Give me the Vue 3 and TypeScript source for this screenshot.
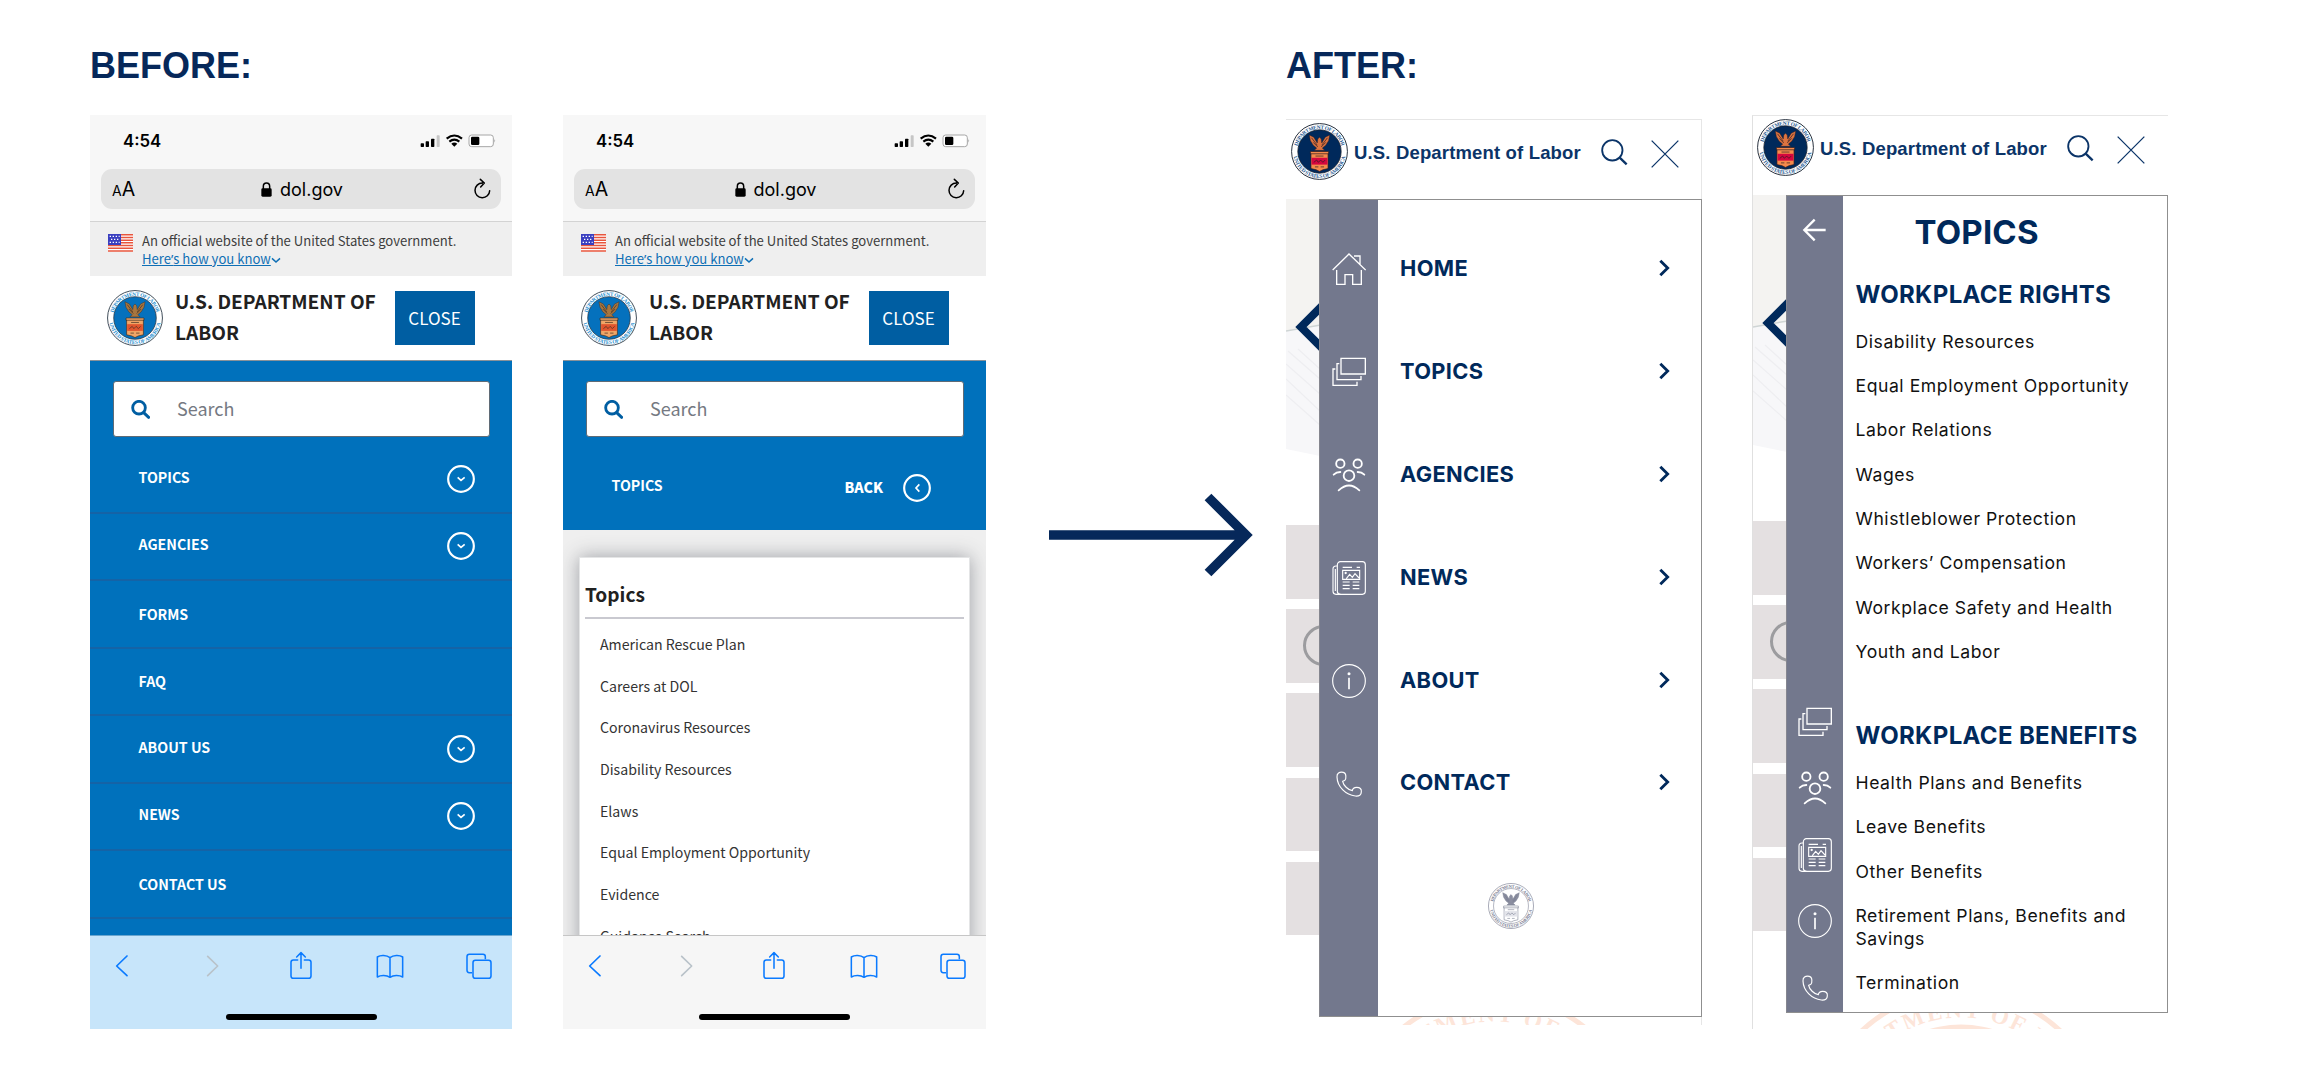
<script setup lang="ts">
import { h } from 'vue'

interface MenuEntry {
  label: string
  expandable: boolean
}
interface DrawerEntry {
  label: string
  icon: string
}
interface TopicGroup {
  title: string
  links: string[]
}

const ringLabel = (path: string, length: number, label: string) =>
  h('text', { class: 'seal-text' }, [
    h('textPath', { href: path, startOffset: '50%', 'text-anchor': 'middle', textLength: length }, label),
  ])

// Department seal; its colours come from the class put on it.
const Seal = (props: { size: number }) =>
  h('svg', { class: 'seal', width: props.size, height: props.size, viewBox: '0 0 100 100' }, [
    h('circle', { class: 'seal-rim', cx: 50, cy: 50, r: 49 }),
    h('path', { id: 'ring-top', d: 'M10.5 50a39.5 39.5 0 0 1 79 0', fill: 'none' }),
    h('path', { id: 'ring-bottom', d: 'M3.5 50a46.5 46.5 0 0 0 93 0', fill: 'none' }),
    ringLabel('#ring-top', 105, 'DEPARTMENT OF LABOR'),
    ringLabel('#ring-bottom', 128, 'UNITED STATES OF AMERICA'),
    h('circle', { class: 'seal-core', cx: 50, cy: 50, r: 38 }),
    h('path', { class: 'seal-eagle', d: 'M32 21l8 4 6 10 1-7 3-3 3 3 1 7 6-10 8-4-2 10-5 8-6 5 4 4H41l4-4-6-5-5-8z' }),
    h('path', { class: 'seal-lines', d: 'M36 26l10 13M39 34l8 8M64 26l-10 13M61 34l-8 8' }),
    h('path', { class: 'seal-shield', d: 'M34 50h32v4h-1v26l-9 2-6 3-6-3-9-2V54h-1z' }),
    h('rect', { class: 'seal-band', x: 36, y: 61, width: 28, height: 12 }),
    h('path', { class: 'seal-lines', d: 'M34 54h32M43 58h14M40 69l5-4 3 4 4-4 4 4 4-4M42 77h6m4 0h6' }),
  ])
Seal.props = ['size']

const oldMenu: MenuEntry[] = [
  { label: 'TOPICS', expandable: true },
  { label: 'AGENCIES', expandable: true },
  { label: 'FORMS', expandable: false },
  { label: 'FAQ', expandable: false },
  { label: 'ABOUT US', expandable: true },
  { label: 'NEWS', expandable: true },
  { label: 'CONTACT US', expandable: false },
]

const oldTopics: string[] = [
  'American Rescue Plan',
  'Careers at DOL',
  'Coronavirus Resources',
  'Disability Resources',
  'Elaws',
  'Equal Employment Opportunity',
  'Evidence',
  'Guidance Search',
]

const drawerMenu: DrawerEntry[] = [
  { label: 'HOME', icon: 'home' },
  { label: 'TOPICS', icon: 'stack' },
  { label: 'AGENCIES', icon: 'people' },
  { label: 'NEWS', icon: 'news' },
  { label: 'ABOUT', icon: 'info' },
  { label: 'CONTACT', icon: 'phone' },
]

const topicGroups: TopicGroup[] = [
  {
    title: 'WORKPLACE RIGHTS',
    links: [
      'Disability Resources',
      'Equal Employment Opportunity',
      'Labor Relations',
      'Wages',
      'Whistleblower Protection',
      'Workers’ Compensation',
      'Workplace Safety and Health',
      'Youth and Labor',
    ],
  },
  {
    title: 'WORKPLACE BENEFITS',
    links: [
      'Health Plans and Benefits',
      'Leave Benefits',
      'Other Benefits',
      'Retirement Plans, Benefits and Savings',
      'Termination',
    ],
  },
]

const browserTools: string[] = ['prev', 'next', 'share', 'book', 'tabs']
const phones: string[] = ['menu', 'topics']
const screens: string[] = ['main', 'sub']
</script>

<template>
  <div class="page">
    <svg class="sprite" width="0" height="0" aria-hidden="true">
      <symbol id="i-prev" viewBox="0 0 90 90"><path d="M60 15L29 45l31 29" fill="none" stroke="#0a7aff" stroke-width="5" stroke-linecap="round" stroke-linejoin="round" /></symbol>
      <symbol id="i-next" viewBox="0 0 90 90"><path d="M35 16l30 29-30 29" fill="none" stroke="#b9c2c9" stroke-width="5" stroke-linecap="round" stroke-linejoin="round" /></symbol>
      <symbol id="i-share" viewBox="0 0 90 90"><path d="M35 27H22q-7 0-7 7v41q0 7 7 7h46q7 0 7-7V34q0-7-7-7H55M45 52V6M32 18L45 5l13 13" fill="none" stroke="#0a7aff" stroke-width="4.600" stroke-linecap="round" stroke-linejoin="round" /></symbol>
      <symbol id="i-book" viewBox="0 0 90 90"><path d="M45 20C35 12 17 11 7 18v60c10-6 28-6 38 1 10-7 28-7 38-1V18c-10-7-28-6-38 2zV78" fill="none" stroke="#0a7aff" stroke-width="4.600" stroke-linejoin="round" /></symbol>
      <symbol id="i-tabs" viewBox="0 0 90 90"><path d="M24 65h-8q-7 0-7-7V17q0-7 7-7h41q7 0 7 7v8" fill="none" stroke="#0a7aff" stroke-width="4.600" /><rect x="27" y="28" width="54" height="54" rx="7" fill="none" stroke="#0a7aff" stroke-width="4.600" /></symbol>

      <symbol id="i-home" viewBox="0 0 102 102"><path d="M2 54L51 6l50 48M66 12h18v25M14 54v43h25V68h23v29h26V54" fill="none" stroke="#fff" stroke-width="4" /></symbol>
      <symbol id="i-stack" viewBox="0 0 102 102"><path d="M27 10h73v47H27zM22 26h-7v48h72V63M10 42H3v49h72V80" fill="none" stroke="#fff" stroke-width="4" /></symbol>
      <symbol id="i-people" viewBox="0 0 102 102"><g fill="none" stroke="#fff" stroke-width="5.500" stroke-linecap="round"><circle cx="25" cy="17" r="12.500" /><circle cx="77" cy="17" r="12.500" /><circle cx="51" cy="53" r="16" /><path d="M5 50q8-8 20-8M77 42q12 0 20 8M20 97q31-29 62 0" /></g></symbol>
      <symbol id="i-news" viewBox="0 0 102 102"><g fill="none" stroke="#fff" stroke-width="3.400"><rect x="16" y="2" width="84" height="98" rx="9" /><path d="M16 15h-4Q3 15 3 24v67q0 9 9 9h14M10 24v66M32 19h28M74 19h10M32 28h51v27H32zM43 53l10-13 8 9 8-11 12 13M32 63h21M62 63h20M32 73h21M62 73h20M32 83h21M62 83h20" /></g><circle cx="41" cy="36" r="3.500" fill="#fff" /></symbol>
      <symbol id="i-info" viewBox="0 0 102 102"><circle cx="51" cy="51" r="49" fill="none" stroke="#fff" stroke-width="3.400" /><circle cx="51" cy="29" r="4.500" fill="#fff" /><path d="M51 41v35" stroke="#fff" stroke-width="5" /></symbol>
      <symbol id="i-phone" viewBox="0 0 102 102"><path d="M15 30C14 18 22 14 34 16c8 2 8 14 7 20-1 5-5 6-9 7 2 12 16 26 29 28 1-7 5-10 13-10 10 0 15 5 14 13 0 10-6 14-18 13C42 84 16 60 15 30z" fill="none" stroke="#fff" stroke-width="3.500" /></symbol>
    </svg>

    <section class="before">
      <h1>BEFORE:</h1>
      <div class="pair">
        <div v-for="kind in phones" :key="kind" class="phone" :class="kind">
          <div class="chrome">
            <div class="status">
              <span class="clock">4:54</span>
              <svg width="76" height="14" viewBox="0 0 228 42">
                <rect x="2" y="28" width="10" height="11" rx="2" /><rect x="17" y="22" width="10" height="17" rx="2" /><rect x="33" y="14" width="10" height="25" rx="2" />
                <rect x="50" y="4" width="9" height="35" rx="2" fill="#c6c6c6" />
                <g fill="none" stroke="#000" stroke-width="6.500"><path d="M80 14q23-19 46 0M88 23q15-12 30 0" /></g>
                <path d="M94 29q9-7 18 0l-9 9z" />
                <rect x="147" y="3" width="73" height="35" rx="8" fill="#fff" stroke="#a6a6a6" stroke-width="3" /><rect x="153" y="8" width="25" height="25" rx="4" /><path d="M223 15q5 5 0 11z" fill="#a6a6a6" />
              </svg>
            </div>
            <div class="url">
              <span class="aa"><small>A</small>A</span>
              <span class="host">
                <svg width="11" height="15" viewBox="0 0 33 45"><rect x="1" y="19" width="31" height="25" rx="4" /><path d="M7 21V13q0-10 9.500-10T26 13v8" fill="none" stroke="#000" stroke-width="4.500" /></svg>
                dol.gov
              </span>
              <svg width="18" height="22" viewBox="0 0 54 66"><path d="M28 15A22 22 0 1 0 50 38M22 4l12 11-11 12" fill="none" stroke="#000" stroke-width="4.500" stroke-linecap="round" stroke-linejoin="round" /></svg>
            </div>
          </div>

          <div class="banner">
            <svg class="flag" width="25" height="18" viewBox="0 0 75 54">
              <rect width="75" height="54" fill="#fff" />
              <path d="M0 2.500h75M0 10.500h75M0 18.500h75M0 26.500h75M0 34.500h75M0 42.500h75M0 51h75" stroke="#e8553d" stroke-width="4.500" />
              <rect width="39" height="33" fill="#3a3fc0" />
              <path d="M5 7h30M9 16h22M5 25h30" stroke="#fff" stroke-width="3.500" stroke-dasharray="4 5" />
            </svg>
            <p>An official website of the United States government.<br /><a>Here<span class="quote">’</span>s how you know</a>
              <svg width="10" height="7" viewBox="0 0 30 21"><path d="M3 4l12 11L27 4" fill="none" stroke="#0f6fb5" stroke-width="4.500" /></svg>
            </p>
          </div>

          <div class="brand">
            <Seal class="bright" :size="56" />
            <h2>U.S. DEPARTMENT OF<br />LABOR</h2>
            <button>CLOSE</button>
          </div>

          <div class="content">
            <div class="nav">
              <div class="search">
                <svg width="19" height="19" viewBox="0 0 57 57"><circle cx="24" cy="23" r="19" fill="none" stroke="#005ea2" stroke-width="8.500" /><path d="M38 38l15 14" stroke="#005ea2" stroke-width="9" stroke-linecap="round" /></svg>
                <span>Search</span>
              </div>
              <template v-if="kind === 'menu'">
                <div v-for="entry in oldMenu" :key="entry.label" class="row" :class="{ open: entry.expandable }">
                  <span>{{ entry.label }}</span>
                  <svg v-if="entry.expandable" width="28" height="28" viewBox="0 0 84 84"><circle cx="42" cy="42" r="38.500" fill="none" stroke="#fff" stroke-width="6.500" /><path d="M32 37l10 9 11-9" fill="none" stroke="#fff" stroke-width="5" /></svg>
                </div>
              </template>
              <div v-else class="row back">
                <span>TOPICS</span>
                <b>BACK</b>
                <svg width="28" height="28" viewBox="0 0 84 84"><circle cx="42" cy="42" r="38.500" fill="none" stroke="#fff" stroke-width="6.500" /><path d="M49 31L39 42l10 11" fill="none" stroke="#fff" stroke-width="5" /></svg>
              </div>
            </div>
            <div v-if="kind === 'topics'" class="card">
              <h3>Topics</h3>
              <ul>
                <li v-for="topic in oldTopics" :key="topic">{{ topic }}</li>
              </ul>
            </div>
          </div>

          <div class="tools">
            <div class="tool-row">
              <svg v-for="tool in browserTools" :key="tool" width="30" height="30"><use :href="'#i-' + tool" /></svg>
            </div>
            <i class="home-bar"></i>
          </div>
        </div>
      </div>
    </section>

    <svg class="arrow" width="204" height="84" viewBox="0 0 204 84"><path d="M0 42h196M159 4l38 38-38 38" fill="none" stroke="#06285a" stroke-width="9.500" /></svg>

    <section class="after">
      <h1>AFTER:</h1>
      <div class="pair">
        <div v-for="screen in screens" :key="screen" class="screen" :class="screen">
          <header>
            <Seal class="dark" :size="57" />
            <strong>U.S. Department of Labor</strong>
            <svg class="find" width="27" height="27" viewBox="0 0 81 81"><circle cx="34" cy="34" r="30.500" fill="none" stroke="#0b3468" stroke-width="5.500" /><path d="M56 56l21 20" stroke="#0b3468" stroke-width="7" /></svg>
            <svg class="shut" width="28" height="28" viewBox="0 0 84 84"><path d="M2 2l80 80M82 2L2 82" stroke="#0b3468" stroke-width="3.800" /></svg>
          </header>
          <div class="body">
            <div class="under">
              <svg width="34" height="257" viewBox="0 0 34 257">
                <path d="M0 0h34v257L0 250z" fill="#f7f7f9" />
                <path d="M0 0h34v127L0 132z" fill="#f4f3f1" />
                <path d="M0 132l34-6" stroke="#cfd5d5" stroke-width="1.500" />
                <path d="M2 152l32 28M12 150l22 20M0 165l34 30M0 180l34 32M0 196l34 30" stroke="#eeeef1" stroke-width="1.200" fill="none" />
                <path d="M36 107L15 128l21 21" fill="none" stroke="#00295b" stroke-width="8" />
              </svg>
              <div v-for="n in 5" :key="n" class="block"><i v-if="n === 2"></i></div>
            </div>
            <div class="drawer">
              <template v-if="screen === 'main'">
                <nav class="rail">
                  <svg v-for="entry in drawerMenu" :key="entry.icon" width="34" height="34"><use :href="'#i-' + entry.icon" /></svg>
                </nav>
                <div class="panel">
                  <div v-for="entry in drawerMenu" :key="entry.label" class="link">
                    <span>{{ entry.label }}</span>
                    <svg width="11" height="18" viewBox="0 0 33 54"><path d="M4 5l22 22L4 49" fill="none" stroke="#00295b" stroke-width="8.500" /></svg>
                  </div>
                  <Seal class="pale" :size="46" />
                </div>
              </template>
              <template v-else>
                <nav class="rail">
                  <svg width="34" height="34" viewBox="0 0 102 102"><path d="M83 51H20M50 20L19 51l31 31" fill="none" stroke="#fff" stroke-width="7" /></svg>
                  <svg v-for="entry in drawerMenu.slice(1)" :key="entry.icon" width="34" height="34"><use :href="'#i-' + entry.icon" /></svg>
                </nav>
                <div class="panel">
                  <h2>TOPICS</h2>
                  <template v-for="group in topicGroups" :key="group.title">
                    <h3>{{ group.title }}</h3>
                    <ul>
                      <li v-for="link in group.links" :key="link">{{ link }}</li>
                    </ul>
                  </template>
                </div>
              </template>
            </div>
          </div>
          <svg class="watermark" width="300" viewBox="0 0 300 16" preserveAspectRatio="xMidYMin slice">
            <circle cx="150" cy="123.500" r="145" fill="none" stroke="#fde5d9" stroke-width="5" />
            <circle cx="150" cy="123.500" r="112" fill="#fde5d9" />
            <path :id="'mark-' + screen" d="M31 123.500a119 119 0 0 1 238 0" fill="none" />
            <text class="mark-text"><textPath :href="'#mark-' + screen" startOffset="50%" text-anchor="middle" textLength="325">DEPARTMENT OF LABOR</textPath></text>
          </svg>
        </div>
      </div>
    </section>
  </div>
</template>

<style>
body {
  background: #fff;
}

/* seal parts, coloured through custom properties */
.seal {
  display: block;
  flex: none;
}
.seal-rim {
  fill: #fff;
  stroke: var(--rim);
  stroke-width: 1.6;
}
.seal-text {
  font: bold 9.5px 'Liberation Serif', serif;
  fill: var(--text);
}
.seal-core {
  fill: var(--core);
  stroke: var(--rim);
  stroke-width: 1.4;
}
.seal-eagle {
  fill: var(--eagle);
  stroke: var(--line);
  stroke-width: 0.8;
}
.seal-shield {
  fill: var(--shield);
  stroke: var(--line);
  stroke-width: 1.2;
}
.seal-band {
  fill: var(--band);
}
.seal-lines {
  fill: none;
  stroke: var(--line);
  stroke-width: 1.2;
}
.seal.bright {
  --rim: #2c3a48;
  --text: #2a8fd0;
  --core: #0571bd;
  --eagle: #a8763f;
  --shield: #f0a566;
  --band: #e0552e;
  --line: #3d2c22;
}
.seal.dark {
  --rim: #16202e;
  --text: #2c5d94;
  --core: #00295b;
  --eagle: #dd7440;
  --shield: #f58a4b;
  --band: #d5063f;
  --line: #2b1b22;
}
.seal.pale {
  --rim: #8b8ea0;
  --text: #777b90;
  --core: #fff;
  --eagle: #8b8ea0;
  --shield: #fff;
  --band: #e3e4ea;
  --line: #73788d;
}
</style>

<style scoped>
.page {
  display: flex;
  align-items: flex-start;
  box-sizing: border-box;
  width: 2298px;
  height: 1069px;
  padding: 45px 0 0 90px;
  overflow: hidden;
  background: #fff;
}
.page * {
  box-sizing: border-box;
}
.sprite {
  position: absolute;
}
svg {
  display: block;
  flex: none;
}
h1,
h2,
h3,
p,
ul {
  margin: 0;
  padding: 0;
}
ul {
  list-style: none;
}
h1 {
  height: 70px;
  font: bold 36px/41px 'Liberation Sans', sans-serif;
  color: #06285a;
}
.before {
  width: 896px;
}
.pair {
  display: flex;
  justify-content: space-between;
  align-items: flex-start;
}
.arrow {
  margin: 448px 33px 0 63px;
}
.after {
  width: 882px;
}

/* phones */
.phone {
  display: flex;
  flex-direction: column;
  width: 422px;
  height: 914px;
  overflow: hidden;
  font-family: 'Noto Sans CJK SC', 'Noto Sans', sans-serif;
}
.phone.topics {
  width: 423px;
}
.chrome {
  height: 107px;
  padding: 0 11px;
  background: #f7f7f7;
  border-bottom: 1px solid #d3d3d3;
  font-family: Inter, sans-serif;
}
.status {
  display: flex;
  justify-content: space-between;
  align-items: center;
  height: 54px;
  padding: 0 5px 2px 22px;
}
.clock {
  font-size: 16.800px;
  font-weight: 600;
}
.url {
  display: flex;
  justify-content: space-between;
  align-items: center;
  height: 40px;
  padding: 0 10px 0 11px;
  background: #e3e3e3;
  border-radius: 11px;
}
.aa {
  width: 28px;
  font-size: 19.500px;
}
.aa small {
  font-size: 14px;
}
.host {
  display: flex;
  align-items: center;
  gap: 8px;
  margin-right: 9px;
  font-size: 18px;
}
.banner {
  display: flex;
  height: 54px;
  padding: 10px 0 0 18px;
  background: #efefef;
}
.flag {
  margin: 2px 9px 0 0;
}
.banner p {
  font-size: 13.100px;
  line-height: 18px;
  color: #3d3d3d;
  white-space: nowrap;
}
.banner a {
  color: #0f6fb5;
  text-decoration: underline;
}
.quote {
  font-family: 'Noto Sans', sans-serif;
  line-height: 1;
}
.banner p svg {
  display: inline-block;
}
.brand {
  display: flex;
  height: 85px;
  padding: 14px 0 0 17px;
  border-bottom: 1px solid #8a9299;
  background: #fff;
}
.topics .brand {
  padding-left: 18px;
}
.brand h2 {
  width: 220px;
  margin: -4.500px 0 0 12px;
  font-size: 19.100px;
  font-weight: bold;
  line-height: 31.500px;
  color: #212121;
  white-space: nowrap;
}
.brand button {
  width: 80px;
  height: 54px;
  margin-top: 1px;
  padding: 0 1px 0 0;
  border: 0;
  background: #005ea2;
  color: #fff;
  font: 17px/52px 'Noto Sans CJK SC', sans-serif;
}
.content {
  flex: 1;
  overflow: hidden;
  background: #efefef;
}
.menu .content {
  background: #0071bc;
}
.nav {
  padding-top: 20px;
  background: #0071bc;
}
.search {
  display: flex;
  align-items: center;
  height: 56px;
  margin: 0 22px 9px 23px;
  padding-left: 17px;
  background: #fff;
  border: 1px solid #5f6b76;
  border-radius: 3px;
  font-size: 18px;
  line-height: 50px;
  color: #757982;
}
.search span {
  margin: -3px 0 0 27px;
}
.row {
  display: flex;
  justify-content: space-between;
  align-items: center;
  height: 67.500px;
  padding: 0 37px 0 48.500px;
  border-bottom: 2px solid #1563a6;
  font-size: 14.200px;
  font-weight: bold;
  line-height: 20px;
  color: #fff;
}
.row span {
  padding-bottom: 0.500px;
}
.row.open span {
  padding-bottom: 4px;
}
.row.back {
  height: 84px;
  border: 0;
  padding: 0 55px 0 48.500px;
}
.row.back span {
  flex: 1;
  padding-bottom: 5.500px;
}
.row.back b {
  margin-right: 20px;
  padding-bottom: 2px;
}
.card {
  height: 500px;
  margin: 27px 16px 0;
  padding: 25.500px 5px 0;
  background: #fff;
  border: 1px solid #e4e5e6;
  box-shadow: 0 0 18px rgba(60, 65, 75, 0.45);
}
.card h3 {
  height: 35.500px;
  border-bottom: 2px solid #c9c9d0;
  font-size: 19.100px;
  line-height: 20px;
  color: #212121;
}
.card ul {
  padding: 5px 0 0 15px;
}
.card li {
  height: 41.670px;
  font-size: 14.150px;
  line-height: 41.670px;
  color: #333;
}
.tools {
  height: 94px;
  padding-top: 15px;
  background: #c7e5fa;
  border-top: 1px solid #6aa6cf;
}
.topics .tools {
  background: #f6f6f6;
  border-top-color: #c6c6c6;
}
.tool-row {
  display: flex;
  justify-content: space-between;
  padding: 0 18px 0 17px;
}
.home-bar {
  display: block;
  width: 151px;
  height: 6px;
  margin: 33px auto 0;
  border-radius: 3px;
  background: #000;
}

/* redesigned screens */
.screen {
  display: flex;
  flex-direction: column;
  width: 416px;
  font-family: Inter, sans-serif;
}
.screen.main {
  height: 906px;
  margin-top: 4px;
  border-top: 1px solid #e6e6e6;
  border-right: 1px solid #e6e6e6;
}
.screen.sub {
  height: 914px;
  border-top: 1px solid #e6e6e6;
  border-left: 1px solid #e0e0e0;
}
.screen header {
  display: flex;
  height: 79px;
  padding: 3px 0 0 5px;
}
header strong {
  width: 247px;
  margin: 18px 0 0 6px;
  font: bold 18.500px/24px 'Liberation Sans', sans-serif;
  letter-spacing: 0.160px;
  color: #0b3468;
  white-space: nowrap;
}
.find {
  margin-top: 16px;
}
.shut {
  margin: 17px 0 0 23px;
}
.sub header {
  padding-left: 4px;
}
.body {
  display: flex;
  height: 818px;
}
.main .body {
  margin-right: -1px;
}
.under {
  width: 33px;
  overflow: hidden;
}
.under > svg {
  margin-bottom: 69px;
}
.block {
  position: relative;
  height: 73.500px;
  margin-bottom: 10.700px;
  background: #e4e0e1;
  overflow: hidden;
}
.block i {
  position: absolute;
  left: 17px;
  top: 16px;
  width: 41px;
  height: 41px;
  border: 3.500px solid #9c9c9f;
  border-radius: 50%;
}
.drawer {
  display: flex;
  flex: 1;
  border: 1.500px solid #8f8f8f;
  border-left: 1px solid #85868f;
  background: #fff;
}
.rail {
  display: flex;
  flex-direction: column;
  align-items: center;
  width: 58px;
  background: #73788d;
}
.main .rail {
  gap: 69px;
  padding-top: 51.500px;
}
.sub .rail {
  width: 56px;
  gap: 32.500px;
  padding-top: 17px;
}
.sub .rail svg:first-child {
  margin-bottom: 425px;
}
.panel {
  flex: 1;
}
.main .panel {
  padding: 16.500px 31px 0 22px;
}
.link {
  display: flex;
  justify-content: space-between;
  align-items: center;
  height: 102.900px;
  font-size: 21.800px;
  font-weight: 700;
  letter-spacing: 0.350px;
  color: #00295b;
}
.pale {
  margin: 49px 0 0 88px;
}
.sub .panel {
  padding: 16px 10px 0 12.500px;
  color: #111;
}
.panel h2 {
  margin: 0 0 27.500px 59px;
  font-size: 33px;
  line-height: 40px;
  letter-spacing: 0.200px;
  color: #00295b;
}
.panel h3 {
  margin-bottom: -1px;
  font-size: 24px;
  line-height: 30px;
  letter-spacing: 0.350px;
  color: #00295b;
  white-space: nowrap;
}
.panel ul + h3 {
  margin-top: 58px;
}
.panel li {
  margin-top: 21.300px;
  font-size: 17.600px;
  line-height: 23px;
  letter-spacing: 0.560px;
}
.watermark {
  flex: 1;
  min-height: 0;
  margin-left: 58px;
}
.mark-text {
  font: bold 23px 'Liberation Serif', serif;
  fill: #fde5d9;
}
</style>
